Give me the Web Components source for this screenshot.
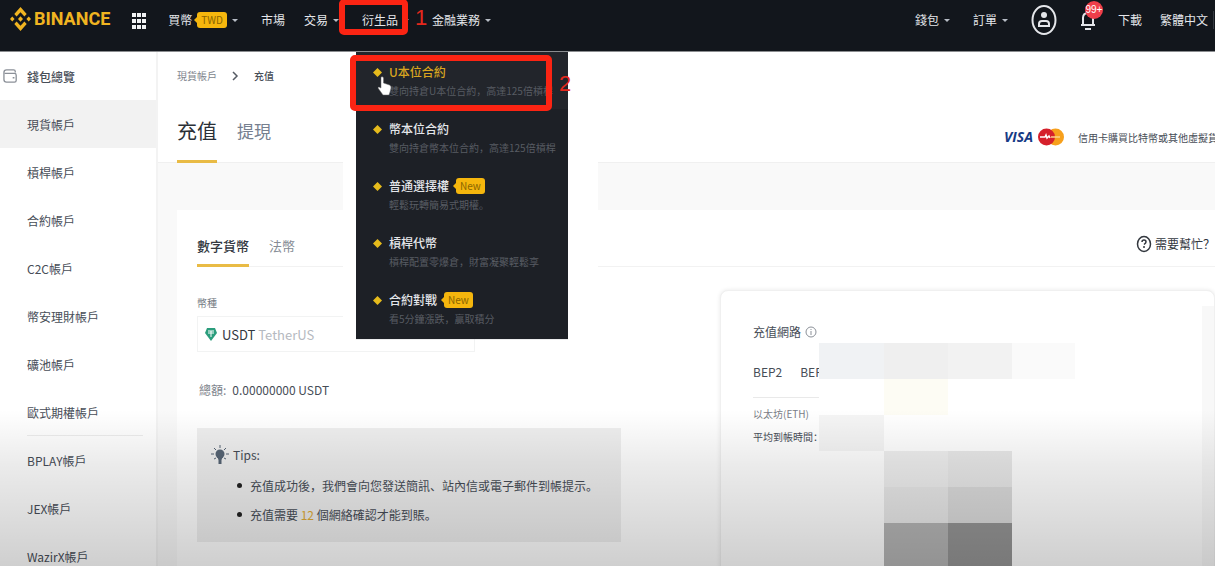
<!DOCTYPE html>
<html lang="zh">
<head>
<meta charset="utf-8">
<title>充值</title>
<style>
html,body{margin:0;height:100%}
body{font-family:"Noto Sans CJK SC","Noto Sans CJK TC",sans-serif;font-size:12px;color:#474d57;background:#fff;overflow:hidden}
</style>
</head>
<body>
<wallet-app></wallet-app>
<script>
function define(name, html) {
  const tpl = document.createElement('template');
  tpl.innerHTML = html;
  customElements.define(name, class extends HTMLElement {
    constructor() {
      super();
      this.attachShadow({ mode: 'open' }).append(tpl.content.cloneNode(true));
    }
  });
}

define('new-badge', `
<style>
:host{display:inline-block;position:relative;background:#f5b60d;color:#8a6500;font-size:10px;line-height:16px;padding:0 4px;border-radius:3px;font-weight:400}
:host::before{content:"";position:absolute;left:-3px;top:5px;border:3px solid transparent;border-left:0;border-right-color:#f5b60d}
</style><slot></slot>`);

define('nav-item', `
<style>
:host{display:block;position:relative}
a{display:flex;align-items:center;gap:5px;color:#e4e6ea;text-decoration:none;line-height:18px;white-space:nowrap}
:host([caret]) a::after{content:"";border:3px solid transparent;border-top-color:#b7bdc6;border-bottom:0}
</style><a href="#"><slot></slot></a><slot name="menu"></slot>`);

define('menu-entry', `
<style>
:host{display:block;padding:10px 4px 9px 17px;color:#e4e6ea}
:host([current]){background:#22252b;color:#d9a520}
a{display:grid;grid-template-columns:9px 1fr;column-gap:7px;align-items:center;color:inherit;text-decoration:none;white-space:nowrap}
svg{width:9px;height:9px}
.t{display:flex;align-items:center;gap:7px;font-weight:500;line-height:20px}
.d{grid-column:2;font-size:10px;line-height:18px;color:#585c63}
</style>
<a href="#"><svg viewBox="0 0 9 9"><path d="M4.500 0 9 4.500 4.500 9 0 4.500z" fill="#e6bb1c"/></svg>
<span class="t"><slot></slot><slot name="badge"></slot></span><span class="d"><slot name="desc"></slot></span></a>`);

define('drop-menu', `
<style>
:host{position:absolute;left:-6px;top:41px;width:212px;padding-bottom:2px;z-index:3;background:#1d2026;box-shadow:0 0 1px #8b8f95}
:host::before{content:"";position:absolute;z-index:-2;left:-13px;right:-30px;top:0;bottom:0;background:#fff}
:host::after{content:"";position:absolute;z-index:-1;inset:0;background:#1d2026}
</style><slot></slot>`);

define('site-header', `
<style>
:host{display:flex;align-items:flex-start;box-sizing:border-box;height:52px;padding:11px 0 0 10px;background:#12161c;border-bottom:1px solid #8b8d90;position:relative;z-index:2}
.logo{display:flex;align-items:center;gap:3px;color:#f0b421;font:700 18px/18px Roboto,sans-serif;text-decoration:none;margin-top:-1px}
.logo svg{width:21px;height:24px;margin:-3px 0}
button{border:0;background:none;padding:0;display:block;line-height:0}
.grid{margin:2px 22px 0 22px}
nav,.right{display:flex}
nav{gap:23px}
.right{margin-left:auto;align-items:flex-start;flex:none}
.right nav-item{margin-right:23px}
.right .last{padding-right:5px;border-right:1px solid #343940;margin-right:1px}
.user{margin:-7px 23px 0 0}
.bell{position:relative;margin:-1px 22px 0 0}
.count{position:absolute;left:5px;top:-9px;width:18px;border-radius:9px;background:#ef3e4a;color:#fff;font-size:10px;line-height:18px;text-align:center}
</style>
<a class="logo" href="#"><svg viewBox="0 0 21 24" fill="#f0b421"><path d="M10.500 0l6.200 7-2.300 2.600-3.900-4.400-3.900 4.400L4.300 7zM10.500 24l6.200-7-2.300-2.600-3.900 4.400-3.900-4.400L4.300 17zM2.300 9.400 4.600 12l-2.300 2.600L0 12zM18.700 9.400 21 12l-2.300 2.600-2.300-2.600zM10.500 9.200 13 12l-2.500 2.800L8 12z"/></svg>BINANCE</a>
<button class="grid" aria-label="產品"><svg width="14" height="16" viewBox="0 0 14 16" fill="#f1f2f4"><path d="M0 0h4v4H0zM5 0h4v4H5zM10 0h4v4h-4zM0 6h4v4H0zM5 6h4v4H5zM10 6h4v4h-4zM0 12h4v4H0zM5 12h4v4H5zM10 12h4v4h-4z"/></svg></button>
<nav>
<nav-item caret>買幣 <new-badge>TWD</new-badge></nav-item>
<nav-item style="margin-right:-4px">市場</nav-item>
<nav-item caret>交易</nav-item>
<nav-item caret><span>衍生品</span>
 <drop-menu slot="menu">
  <menu-entry current>U本位合約<span slot="desc">雙向持倉U本位合約，高達125倍槓桿</span></menu-entry>
  <menu-entry>幣本位合約<span slot="desc">雙向持倉幣本位合約，高達125倍槓桿</span></menu-entry>
  <menu-entry>普通選擇權<new-badge slot="badge">New</new-badge><span slot="desc">輕鬆玩轉簡易式期權。</span></menu-entry>
  <menu-entry>槓桿代幣<span slot="desc">槓桿配置零爆倉，財富凝聚輕鬆享</span></menu-entry>
  <menu-entry>合約對戰<new-badge slot="badge">New</new-badge><span slot="desc">看5分鐘漲跌，贏取積分</span></menu-entry>
 </drop-menu>
</nav-item>
<nav-item caret>金融業務</nav-item>
</nav>
<div class="right">
<nav-item caret>錢包</nav-item><nav-item caret>訂單</nav-item>
<button class="user" aria-label="帳戶"><svg width="26" height="32" viewBox="0 0 26 32" fill="none" stroke="#e4e6ea" stroke-width="2"><ellipse cx="13" cy="16" rx="11.500" ry="14"/><circle cx="13" cy="11" r="3" fill="#e4e6ea" stroke="none"/><path d="M8 22v-2q0-3 3-3h4q3 0 3 3v2z"/></svg></button>
<button class="bell" aria-label="通知"><svg width="16" height="20" viewBox="0 0 16 20" fill="none" stroke="#e4e6ea" stroke-width="2"><path d="M1 15h14M3 15V8q0-5 5-5t5 5v7M5 19h6"/></svg><span class="count">99+</span></button>
<nav-item style="margin-right:18px">下載</nav-item><nav-item class="last">繁體中文</nav-item>
</div>`);

define('side-item', `
<style>
:host{display:block}
a{display:flex;align-items:center;gap:8px;height:48px;padding-left:27px;color:#474d57;text-decoration:none}
:host([current]) a{background:#f2f2f2}
:host([top]) a{padding-left:2px;font-weight:500}
:host([divided]){background:linear-gradient(#ededed,#ededed) 27px 100%/116px 1px no-repeat}
::slotted(svg){flex:none}
</style><a href="#"><slot></slot></a>`);

define('side-bar', `
<style>:host{display:block;background:#fff;border-right:2px solid #f3f3f3;box-sizing:border-box}</style>
<nav>
<side-item top><svg width="17" height="14" viewBox="0 0 17 16" fill="none" stroke="#8b9098" stroke-width="1.500"><path d="M14 4V3q0-2-2-2H4Q1 1 1 4v8q0 3 3 3h9q2 0 2-2V7q0-2-2-2H2M11 10h2"/></svg>錢包總覽</side-item>
<side-item current>現貨帳戶</side-item><side-item>槓桿帳戶</side-item><side-item>合約帳戶</side-item><side-item>C2C帳戶</side-item><side-item>幣安理財帳戶</side-item><side-item>礦池帳戶</side-item><side-item divided>歐式期權帳戶</side-item><side-item>BPLAY帳戶</side-item><side-item>JEX帳戶</side-item><side-item>WazirX帳戶</side-item>
</nav>`);

define('page-head', `
<style>
:host{display:block;background:#fff;border-bottom:1px solid #f0f0f0;padding:0 0 0 19px}
.crumb{display:flex;align-items:center;gap:15px;font-size:10px;line-height:16px;padding-top:16px;color:#80858d}
.crumb a{color:inherit;text-decoration:none}.crumb b{font-weight:500;color:#474d57}
.row{display:flex;justify-content:space-between;margin-top:27px;height:52px;margin-bottom:-1px}
.tabs{display:flex;gap:20px;align-items:flex-start}
.tabs a{font-size:17px;line-height:40px;height:52px;box-sizing:border-box;color:#76808f;text-decoration:none}
.tabs .on{font-size:20px;color:#2b3037;border-bottom:3px solid #e9bb45}
.pay{display:flex;align-items:center;height:32px;margin-top:10px;flex:none;font-size:10px;white-space:nowrap;width:211px;overflow:hidden}
.visa{font:italic 700 14px/20px "Open Sans",sans-serif;color:#163a85;margin-right:5px}
.pay svg{margin-right:14px;flex:none}
</style>
<div class="crumb"><a href="#">現貨帳戶</a><svg width="7" height="10" viewBox="0 0 7 10" fill="none" stroke="#555b64" stroke-width="1.500"><path d="M1 1l4 4-4 4"/></svg><b>充值</b></div>
<div class="row"><div class="tabs"><a class="on" href="#">充值</a><a href="#">提現</a></div>
<div class="pay"><span class="visa">VISA</span><svg width="26" height="18" viewBox="0 0 26 18"><circle cx="17.500" cy="9" r="8.500" fill="#f7a01c"/><circle cx="8.500" cy="9" r="8.500" fill="#d5202b"/><path d="M2 9h5l1-2 1 3 2-2 1 2" stroke="#fff" stroke-width="1.500" fill="none"/><path d="M13 9h9" stroke="#fbd28a" stroke-width="1.500"/></svg><span>信用卡購買比特幣或其他虛擬貨幣</span></div></div>`);

define('tips-box', `
<style>
:host{display:block;background:#efefef;padding:17px 14px 13px;color:#474d57}
h3{margin:0;font-weight:400;font-size:12px;line-height:20px;display:flex;align-items:center;gap:4px}
ul{margin:6px 0 0;padding:0 0 0 39px;list-style:none;line-height:29px;white-space:nowrap}
li{position:relative}
li::before{content:"";position:absolute;left:-13px;top:12px;width:5px;height:5px;border-radius:50%;background:#222}
b{font-weight:400;color:#e0aa35}
</style>
<h3><svg width="18" height="20" viewBox="0 0 18 20" fill="#566474"><circle cx="9" cy="9" r="4.500"/><path d="M6 11h6l-1.500 4v4h-3v-4z"/><path d="M9 0v3M3 3l2 2M15 3l-2 2M0 9h3M15 9h3M3 14l2-1M15 14l-2-1" stroke="#566474"/></svg>Tips:</h3>
<ul><li>充值成功後，我們會向您發送簡訊、站內信或電子郵件到帳提示。</li><li>充值需要 <b>12</b> 個網絡確認才能到賬。</li></ul>`);

define('mosaic-cover', `
<style>
:host{position:absolute;left:98px;top:52px;display:grid;grid-template-columns:65px 64px 64px 63px;grid-auto-rows:36px}
i{background:#fff}
.c{background:none}
</style>
<i style="background:#f0f2f4"></i><i style="background:#efefef"></i><i style="background:#f2f2f2"></i><i style="background:#fafafa"></i>
<i></i><i style="background:#fdfcf4"></i><i class="c"></i><i class="c"></i>
<i style="background:#f5f5f5"></i><i class="c"></i><i class="c"></i><i class="c"></i>
<i class="c"></i><i style="background:#efefef"></i><i style="background:#e9e9e9"></i><i class="c"></i>
<i class="c"></i><i style="background:#e9e9e9"></i><i style="background:#dcdcdc"></i><i class="c"></i>
<i class="c"></i><i style="background:#b5b5b5;height:43px"></i><i style="background:#959595;height:43px"></i><i class="c"></i>`);

define('network-panel', `
<style>
:host{display:block;position:relative;box-sizing:border-box;border:1px solid #f0f0f0;border-radius:8px 8px 0 0;box-shadow:0 0 4px #e8e8e8;background:linear-gradient(#f8f8f8,#f8f8f8) 100% 15px/12px 100% no-repeat #fff;padding:31px 32px 0}
h3{margin:0;display:flex;align-items:center;gap:4px;font-size:12px;line-height:20px;font-weight:400}
.nets{display:flex;gap:18px;margin-top:20px;height:35px;width:66px;overflow:hidden;border-bottom:1px solid #e9e9e9;line-height:20px}
button{border:0;background:none;padding:0;font:inherit;color:inherit;height:20px}
p{margin:0;font-size:10px;line-height:23px}
.s{color:#7b8087;padding-top:4px}
</style>
<h3>充值網路<svg width="12" height="12" viewBox="0 0 12 12" fill="none" stroke="#8b9098"><circle cx="6" cy="6" r="5"/><path d="M6 5v4M6 3v1"/></svg></h3>
<div class="nets"><button>BEP2</button><button>BEP20</button></div>
<p class="s">以太坊(ETH)</p><p>平均到帳時間：</p>
<mosaic-cover></mosaic-cover>`);

define('deposit-card', `
<style>
:host{display:block;margin:47px 0 0 19px;background:#fff;padding-left:20px;height:100%}
.bar{display:flex;justify-content:space-between;align-items:flex-start;border-bottom:1px solid #f2f2f2;height:56px}
.tabs{display:flex;gap:20px;font-size:13px}
.tabs a{line-height:20px;padding:26px 0 8px;color:#868c95;text-decoration:none;border-bottom:3px solid transparent}
.tabs .on{color:#33383f;font-weight:500;border-color:#e9bb45}
.help{display:flex;align-items:center;gap:3px;margin-top:24px;line-height:20px;color:#33383f;text-decoration:none;white-space:nowrap}
.help svg{flex:none}
.cols{display:grid;grid-template-columns:424px 1fr;gap:99px;align-items:stretch}
label{display:block;font-size:10px;line-height:16px;margin-top:28px;color:#737983}
.pick{display:flex;align-items:center;gap:5px;box-sizing:border-box;width:278px;height:36px;margin-top:5px;border:1px solid #f2f3f3;padding-left:7px}
button{flex:1;text-align:left;border:0;background:none;padding:0;font:inherit;font-size:13px;color:#33383f}
button span{color:#b5b9c0}
.bal{line-height:20px;margin:28px 0}.bal span{color:#80858d;margin:0 6px 0 2px}
network-panel{margin-top:23px;height:600px}
</style>
<div class="bar"><div class="tabs"><a class="on" href="#">數字貨幣</a><a href="#">法幣</a></div>
<a class="help" href="#"><svg width="16" height="18" viewBox="0 0 16 18" fill="none" stroke="#33383f" stroke-width="1.500"><ellipse cx="8" cy="9" rx="6.500" ry="7.500"/><path d="M6 7q0-2 2-2t2 2q0 1-2 2.500M8 11v2"/></svg>需要幫忙？</a></div>
<div class="cols"><div>
<label for="coin">幣種</label>
<div class="pick"><svg width="12" height="13" viewBox="0 0 12 13"><path d="M2 0h8l2 5-6 8-6-8z" fill="#2b9d7c"/><path d="M3 3h6M6 3v6M3 5h6" stroke="#fff" fill="none"/></svg><button id="coin">USDT <span>TetherUS</span></button></div>
<div class="bal"><span>總額:</span>0.00000000 USDT</div>
<tips-box></tips-box>
</div><network-panel></network-panel></div>`);

define('step-mark', `
<style>
:host{position:absolute;z-index:5;box-sizing:border-box;border:6px solid #fb2413;border-radius:5px;pointer-events:none}
span{position:absolute;left:calc(100% + 13px);top:50%;margin-top:-11px;font:22px/24px "Liberation Sans",sans-serif;color:#e5281c}
</style><span><slot></slot></span>`);

define('wallet-app', `
<style>
:host{display:flex;flex-direction:column;height:100vh;overflow:hidden;position:relative}
.body{display:grid;grid-template-columns:158px minmax(0,1fr);flex:1;min-height:0}
main{background:#f9f9f9;overflow:hidden}
:host::after{content:"";position:absolute;inset:auto 0 0 0;height:156px;background:linear-gradient(rgba(0,0,0,0),rgba(0,0,0,.08) 35%,rgba(0,0,0,.19));pointer-events:none;z-index:1}
.one{left:339px;top:-1px;width:69px;height:36px}
.two{left:350px;top:55px;width:202px;height:56px}
.hand{position:absolute;left:377px;top:76px;z-index:4}
</style>
<site-header></site-header>
<div class="body"><side-bar></side-bar><main><page-head></page-head><deposit-card></deposit-card></main></div>
<svg class="hand" width="15" height="20" viewBox="0 0 15 20"><path d="M4 1q2-1 2.500 1v5l6 2q2 1 1.500 3l-1 4-1 3H6l-5-7q0-2 3 0z" fill="#fff" stroke="#666" stroke-width=".5"/></svg>
<step-mark class="one">1</step-mark><step-mark class="two">2</step-mark>`);
</script>
</body>
</html>
